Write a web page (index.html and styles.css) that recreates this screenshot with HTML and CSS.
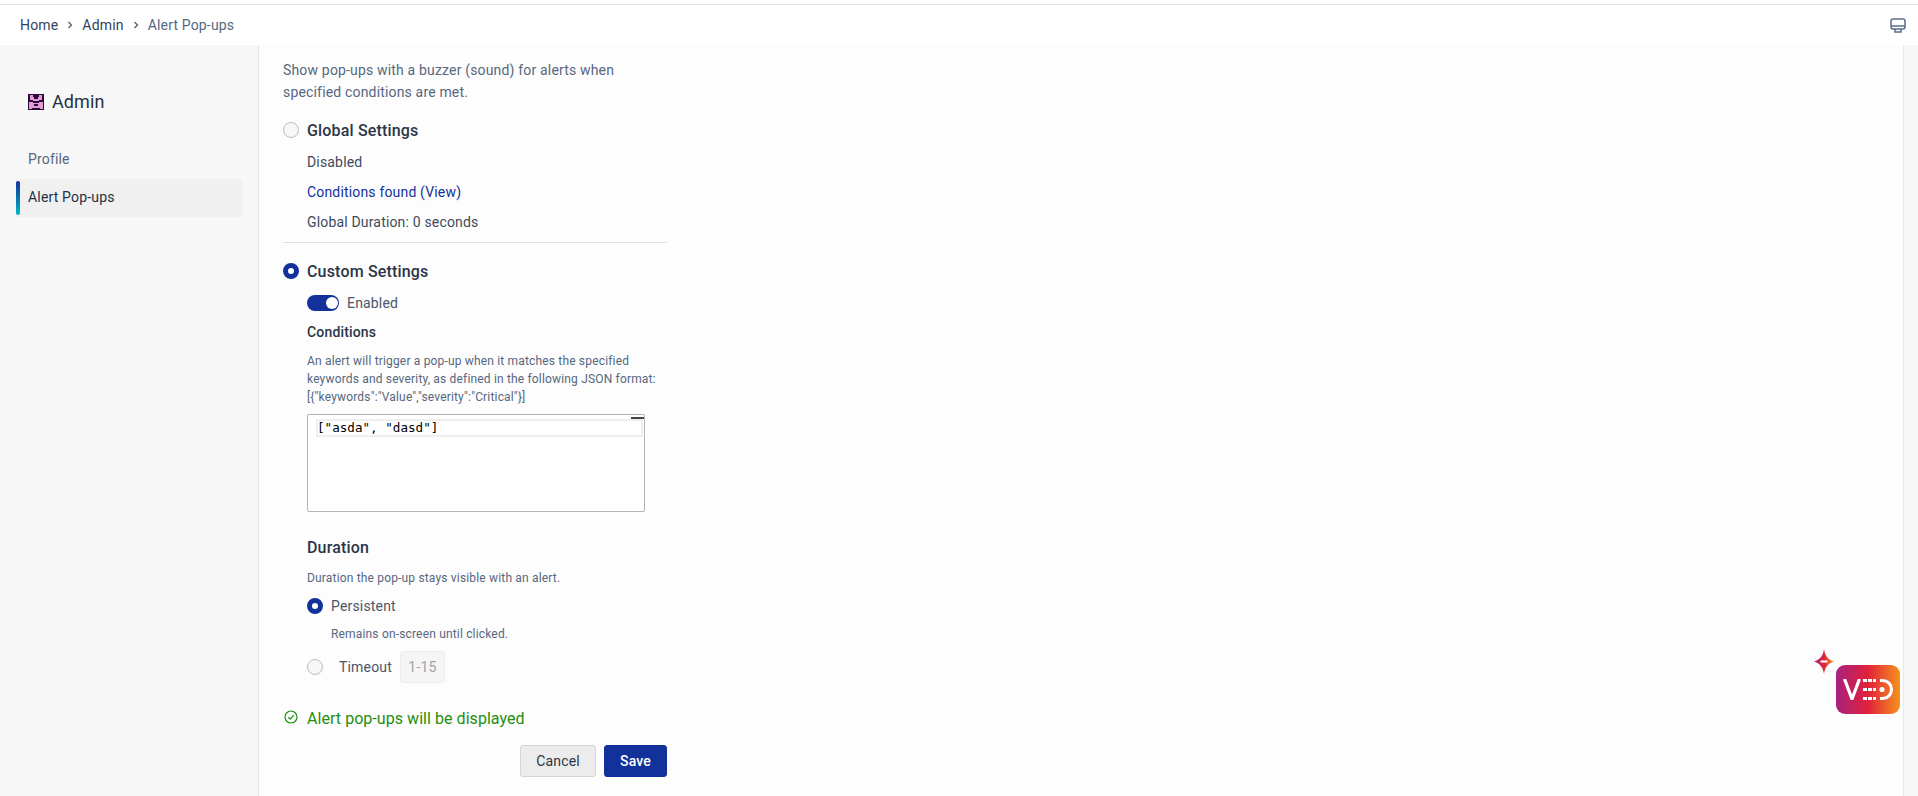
FILE: index.html
```html
<!DOCTYPE html>
<html>
<head>
    <title>Alert Pop-ups</title>
    <link rel="stylesheet" href="styles.css">
</head>
<body>
    <div class="top-line"></div>
    <header class="crumb-bar">
        <nav class="crumbs">
            <span>Home</span>
            <svg class="crumb-sep" viewBox="0 0 8 10"><path d="M2.5 2 L5.5 5 L2.5 8"/></svg>
            <span>Admin</span>
            <svg class="crumb-sep" viewBox="0 0 8 10"><path d="M2.5 2 L5.5 5 L2.5 8"/></svg>
            <span class="crumb-current">Alert Pop-ups</span>
        </nav>
        <svg class="monitor" viewBox="0 0 16 15">
            <rect x="1" y="1" width="14" height="10" rx="2"/>
            <path d="M1 8 H15 M5 11 V14 H11 V11"/>
        </svg>
    </header>

    <div class="page">
        <aside class="sidebar">
            <div class="side-title">
                <svg class="chest" viewBox="0 0 16 16">
                    <rect width="16" height="16" fill="#2a0f3d"/>
                    <path fill="#e39ad6" d="M2 1h3v2h1v2h4V3h1V1h3v5h-3v1H5V6H2zM1 8h4v1h6V8h4v7h-3v-1H4v1H1zM6 10v2h4v-2z"/>
                </svg>
                <span>Admin</span>
            </div>
            <a class="side-link">Profile</a>
            <a class="side-link side-active">Alert Pop-ups</a>
        </aside>

        <main class="content">
            <p class="intro">Show pop-ups with a buzzer (sound) for alerts when specified conditions are met.</p>

            <div class="radio-row">
                <span class="radio"></span>
                <h3>Global Settings</h3>
            </div>
            <div class="global-info">
                <p>Disabled</p>
                <p class="link">Conditions found (View)</p>
                <p>Global Duration: 0 seconds</p>
            </div>

            <hr class="divider">

            <div class="radio-row">
                <span class="radio radio-on"></span>
                <h3>Custom Settings</h3>
            </div>

            <div class="custom">
                <div class="toggle-row">
                    <span class="toggle"><span class="knob"></span></span>
                    <span>Enabled</span>
                </div>

                <h4>Conditions</h4>
                <p class="hint cond-hint">An alert will trigger a pop-up when it matches the specified keywords and severity, as defined in the following JSON format: [{"keywords":"Value","severity":"Critical"}]</p>

                <div class="editor">
                    <div class="cursor-mark"></div>
                    <div class="editor-line">["asda", "dasd"]</div>
                </div>

                <h3 class="dur-title">Duration</h3>
                <p class="hint">Duration the pop-up stays visible with an alert.</p>

                <div class="dur-row persistent">
                    <span class="radio radio-on"></span>
                    <span>Persistent</span>
                </div>
                <p class="hint dur-hint">Remains on-screen until clicked.</p>
                <div class="dur-row timeout">
                    <span class="radio"></span>
                    <span class="timeout-label">Timeout</span>
                    <span class="num-input">1-15</span>
                </div>
            </div>

            <div class="status">
                <svg class="status-icon" viewBox="0 0 14 14">
                    <circle cx="7" cy="7" r="6"/>
                    <path d="M4.3 7.2 L6.3 9.1 L9.8 5.2"/>
                </svg>
                <span>Alert pop-ups will be displayed</span>
            </div>

            <div class="actions">
                <button class="btn btn-cancel">Cancel</button>
                <button class="btn btn-save">Save</button>
            </div>
        </main>

        <div class="ved-widget">
            <svg class="ved-star" viewBox="0 0 20 25">
                <defs>
                    <linearGradient id="starFill" x1="0" y1="0" x2="1" y2="0">
                        <stop offset="0" stop-color="#a8217f"/>
                        <stop offset="0.5" stop-color="#e0223a"/>
                        <stop offset="1" stop-color="#f6921e"/>
                    </linearGradient>
                </defs>
                <path fill="url(#starFill)" d="M10 0 C11 7 14 10.5 20 12.5 C14 14.5 11 18 10 25 C9 18 6 14.5 0 12.5 C6 10.5 9 7 10 0 Z"/>
                <rect x="6.5" y="11.5" width="7" height="2" fill="#fff"/>
            </svg>
            <div class="ved-badge">
                <svg viewBox="0 0 50 21">
                    <path d="M1.5 0 L9 20 L16.5 0" fill="none" stroke="#fff" stroke-width="3.2"/>
                    <path d="M20 1.5 H33 M20 10.5 H33 M20 19.5 H33" stroke="#fff" stroke-width="3" stroke-dasharray="4 1"/>
                    <circle cx="39" cy="10.5" r="2.6" fill="#fff"/>
                    <path d="M37 1.5 H39 C45 1.5 48.5 5.5 48.5 10.5 C48.5 15.5 45 19.5 39 19.5 H37" fill="none" stroke="#fff" stroke-width="3"/>
                </svg>
            </div>
        </div>

        <div class="scroll-track"></div>
    </div>
</body>
</html>
```

FILE: styles.css
```css
* {
    box-sizing: border-box;
}
html, body {
    height: 100%;
}
body {
    margin: 0;
    font-family: Roboto, "Liberation Sans", sans-serif;
    font-size: 14px;
    letter-spacing: 0.17px;
    color: #2b3648;
    background: #fdfdfd;
    overflow: hidden;
    display: flex;
    flex-direction: column;
}
p, h3, h4 {
    margin: 0;
}
.top-line {
    height: 5px;
    flex: none;
    background: #fff;
    border-bottom: 1px solid #e2e2e2;
}
.crumb-bar {
    height: 40px;
    flex: none;
    background: #fff;
    display: flex;
    align-items: center;
    justify-content: space-between;
    padding: 0 1px 0 20px;
}
.crumbs {
    display: flex;
    align-items: center;
    gap: 8px;
    color: #33435c;
    font-size: 14px;
}
.crumb-sep {
    width: 8px;
    height: 10px;
    fill: none;
    stroke: #4b5a70;
    stroke-width: 1.2;
}
.crumb-current {
    color: #56677f;
}
.monitor {
    width: 16px;
    height: 15px;
    margin-right: 11px;
    fill: none;
    stroke: #5a6d86;
    stroke-width: 1.5;
}
.page {
    flex: 1;
    display: flex;
    position: relative;
    min-height: 0;
}
.sidebar {
    width: 259px;
    flex: none;
    background: #f7f7f7;
    border-right: 1px solid #e4e4e4;
    padding: 45px 16px 0 16px;
}
.side-title {
    display: flex;
    align-items: center;
    gap: 8px;
    padding-left: 12px;
    font-size: 18px;
    letter-spacing: 0.1px;
    color: #243044;
    line-height: 24px;
}
.chest {
    width: 16px;
    height: 16px;
}
.side-link {
    display: block;
    font-size: 14px;
    height: 38px;
    line-height: 36px;
    padding-left: 12px;
    color: #56677f;
    border-radius: 3px;
    position: relative;
}
.side-title + .side-link {
    margin-top: 27px;
}
.side-active {
    background: #f0f0f0;
    color: #243044;
}
.side-active::before {
    content: "";
    position: absolute;
    left: 0;
    top: 2px;
    bottom: 2px;
    width: 4px;
    border-radius: 2px;
    background: linear-gradient(#12319b, #00b8c4);
}
.content {
    width: 409px;
    flex: none;
    padding: 14px 0 0 24px;
}
.intro {
    color: #56677f;
    font-size: 14px;
    line-height: 22px;
    width: 350px;
}
.radio-row {
    display: flex;
    align-items: center;
    gap: 8px;
    margin-top: 15px;
    height: 24px;
}
.radio-row h3 {
    font-size: 16px;
    font-weight: 500;
    color: #2b3648;
}
.radio {
    width: 16px;
    height: 16px;
    flex: none;
    border-radius: 50%;
    border: 1px solid #bdbdbd;
    background: #f7f7f7;
}
.radio-on {
    border: 5px solid #12319b;
    background: #fff;
}
.global-info {
    padding-left: 24px;
    margin-top: 5px;
}
.global-info p {
    line-height: 30px;
    color: #3e4a5c;
}
.global-info .link {
    color: #12319b;
}
.divider {
    border: 0;
    border-top: 1px solid #e2e2e2;
    margin: 5px 0 0 0;
    width: 384px;
}
.divider + .radio-row {
    margin-top: 16px;
}
.custom {
    padding-left: 24px;
}
.toggle-row {
    display: flex;
    align-items: center;
    gap: 8px;
    height: 20px;
    margin-top: 10px;
    color: #4a5668;
}
.toggle {
    width: 32px;
    height: 16px;
    border-radius: 8px;
    background: #12319b;
    display: flex;
    align-items: center;
    justify-content: flex-end;
    padding-right: 1px;
}
.knob {
    width: 12px;
    height: 12px;
    border-radius: 50%;
    background: #fff;
}
.custom h4 {
    font-size: 14px;
    font-weight: 500;
    margin-top: 9px;
    line-height: 20px;
}
.hint {
    font-size: 12px;
    color: #56677f;
    line-height: 18px;
}
.cond-hint {
    margin-top: 10px;
    width: 360px;
}
.editor {
    width: 338px;
    height: 98px;
    margin-top: 8px;
    border: 1px solid #b4b4b4;
    border-radius: 2px;
    background: #fff;
    position: relative;
    padding: 4px 1px 0 8px;
}
.editor-line {
    height: 18px;
    font-family: "DejaVu Sans Mono", "Liberation Mono", monospace;
    font-size: 12.6px;
    letter-spacing: 0;
    line-height: 14px;
    color: #000;
    border: 2px solid #eeeeee;
    text-indent: -1px;
    white-space: pre;
}
.cursor-mark {
    position: absolute;
    right: 0;
    top: 2px;
    width: 13px;
    height: 2px;
    background: #444;
}
.dur-title {
    font-size: 16px;
    font-weight: 500;
    margin-top: 25px;
    line-height: 22px;
}
.dur-title + .hint {
    margin-top: 10px;
}
.dur-row {
    display: flex;
    align-items: center;
    gap: 8px;
    color: #4a5668;
}
.persistent {
    margin-top: 9px;
    height: 20px;
}
.dur-hint {
    padding-left: 24px;
    margin-top: 9px;
}
.timeout {
    margin-top: 8px;
    height: 32px;
}
.timeout-label {
    margin-left: 8px;
}
.num-input {
    width: 45px;
    height: 32px;
    background: #f5f5f5;
    border: 1px solid #ececec;
    border-radius: 3px;
    color: #9aa3af;
    display: flex;
    align-items: center;
    justify-content: center;
}
.status {
    display: flex;
    align-items: center;
    gap: 9px;
    margin-top: 25px;
    padding-left: 1px;
    font-size: 16px;
    letter-spacing: 0.05px;
    line-height: 22px;
    color: #1f8f0f;
}
.status-icon {
    width: 14px;
    height: 14px;
    margin-top: -5px;
    fill: none;
    stroke: #1f8f0f;
    stroke-width: 1.2;
}
.actions {
    display: flex;
    justify-content: flex-end;
    gap: 8px;
    width: 384px;
    margin-top: 15px;
}
.btn {
    height: 32px;
    border-radius: 3px;
    font-family: inherit;
    font-size: 14px;
    letter-spacing: inherit;
    padding: 0;
}
.btn-cancel {
    width: 76px;
    background: #ececec;
    border: 1px solid #d4d4d4;
    color: #2b3648;
}
.btn-save {
    width: 63px;
    background: #12319b;
    border: 1px solid #12319b;
    color: #fff;
    font-weight: 500;
}
.ved-widget {
    position: absolute;
    left: 1814px;
    top: 604px;
}
.ved-star {
    position: absolute;
    left: 0;
    top: 0;
    width: 20px;
    height: 25px;
}
.ved-badge {
    position: absolute;
    left: 22px;
    top: 16px;
    width: 64px;
    height: 49px;
    border-radius: 9px;
    background: linear-gradient(90deg, #a8217f, #e0223a 50%, #f6921e);
    display: flex;
    align-items: center;
    justify-content: center;
}
.ved-badge svg {
    width: 50px;
    height: 21px;
}
.scroll-track {
    position: absolute;
    right: 0;
    top: 0;
    bottom: 0;
    width: 15px;
    background: #f7f7f7;
    border-left: 1px solid #e8e8e8;
}
```
